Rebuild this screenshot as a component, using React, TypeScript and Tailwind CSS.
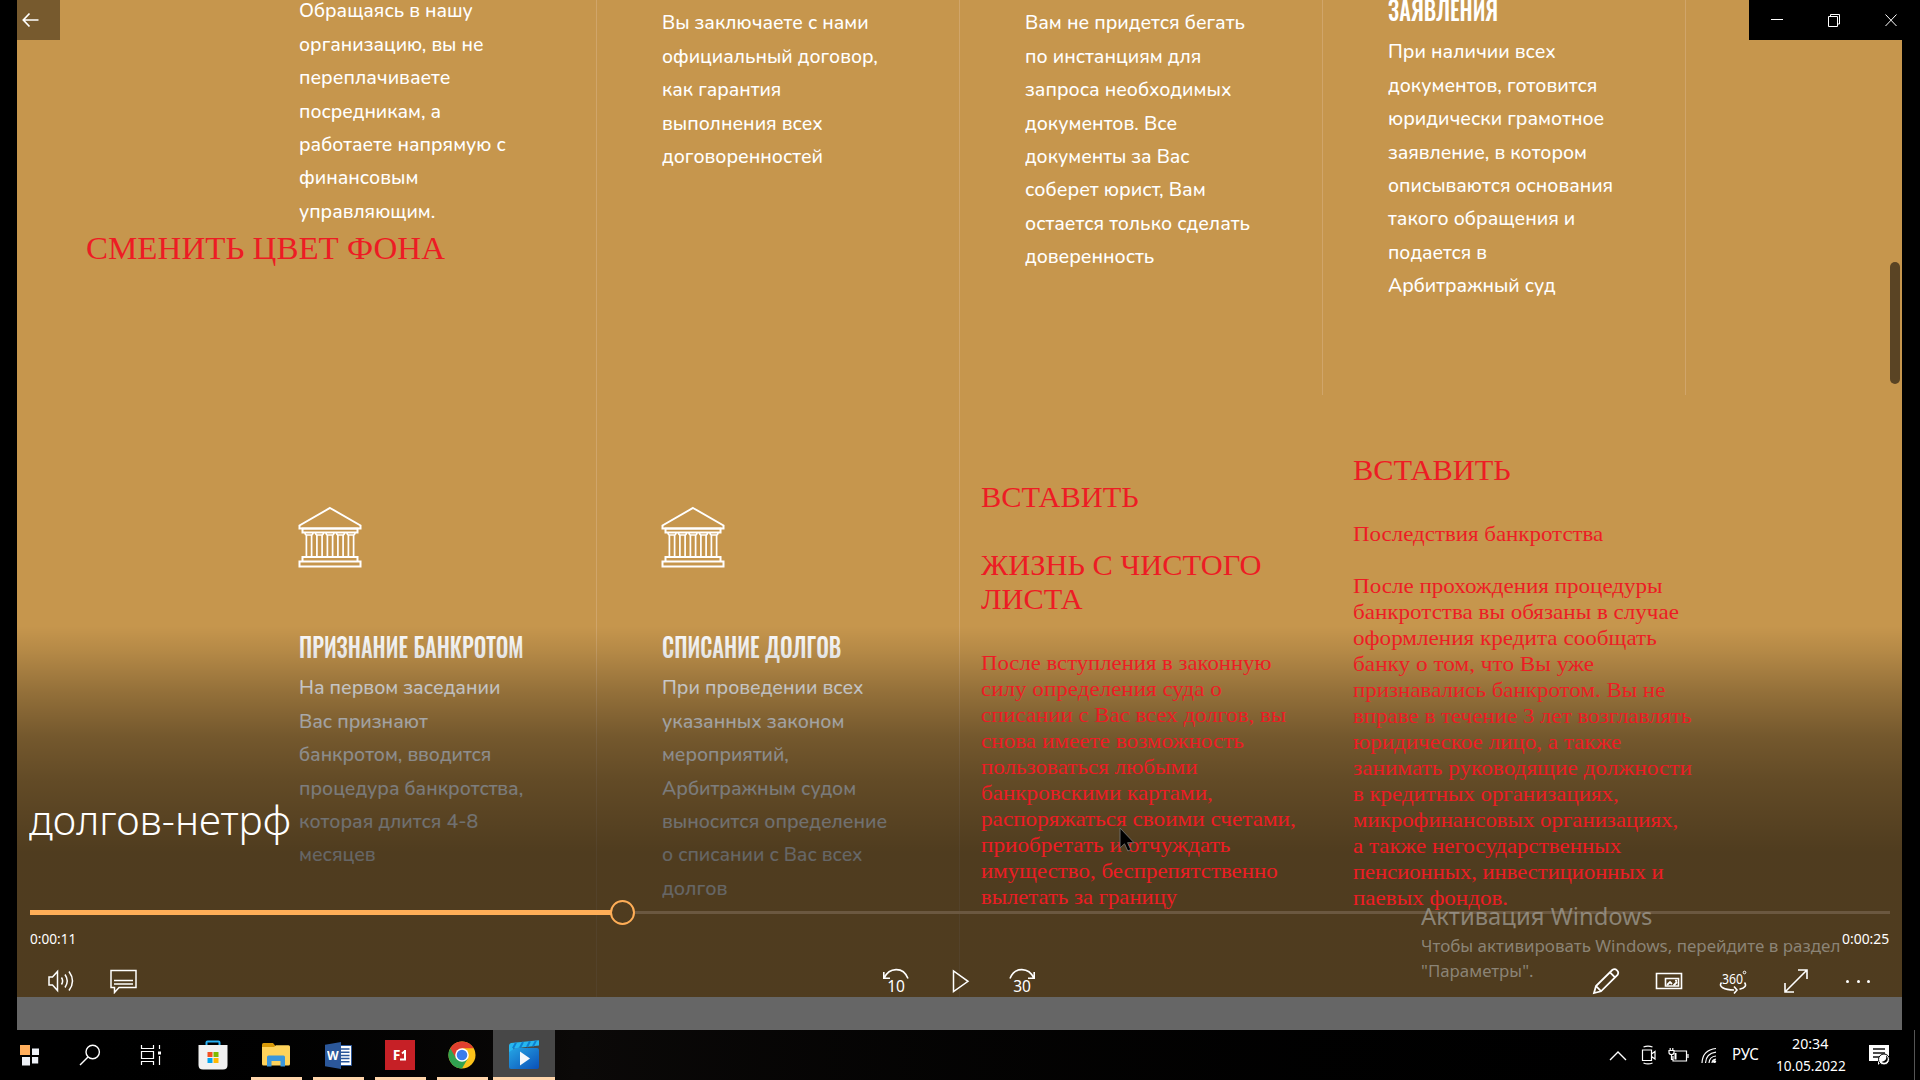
import { useLayoutEffect, useRef, useState } from "react";

type Row = [text: string, width: number];

/** A single line of text condensed or stretched to a given width. */
function Fit({ text, w, className = "" }: { text: string; w: number; className?: string }) {
  const ref = useRef<HTMLSpanElement>(null);
  const [scale, setScale] = useState(1);
  useLayoutEffect(() => {
    if (ref.current) setScale(w / ref.current.offsetWidth);
  }, [w, text]);
  return (
    <div className={`whitespace-nowrap ${className}`} style={{ width: w }}>
      <span ref={ref} className="inline-block origin-left align-top" style={{ transform: `scaleX(${scale})` }}>
        {text}
      </span>
    </div>
  );
}

function Copy({ rows }: { rows: Row[] }) {
  return (
    <div className="font-['Nunito','Lato','Noto_Sans',sans-serif] text-[19.5px] font-medium leading-[33.4px] text-white">
      {rows.map(([t, w]) => (
        <Fit key={t} text={t} w={w} />
      ))}
    </div>
  );
}

function Heading({ text, w }: { text: string; w: number }) {
  return <Fit text={text} w={w} className="font-['Oswald','Roboto_Condensed','Roboto',sans-serif] text-[27px] font-medium leading-[36px] text-white" />;
}

const top: { pad: string; head?: Row; rows: Row[] }[] = [
  {
    pad: "-mt-[5.700px]",
    rows: [
      ["Обращаясь в нашу", 174],
      ["организацию, вы не", 185],
      ["переплачиваете", 151],
      ["посредникам, а", 142],
      ["работаете напрямую с", 207],
      ["финансовым", 119],
      ["управляющим.", 136],
    ],
  },
  {
    pad: "mt-[6.300px]",
    rows: [
      ["Вы заключаете с нами", 207],
      ["официальный договор,", 216],
      ["как гарантия", 119],
      ["выполнения всех", 161],
      ["договоренностей", 161],
    ],
  },
  {
    pad: "mt-[6.300px]",
    rows: [
      ["Вам не придется бегать", 220],
      ["по инстанциям для", 176],
      ["запроса необходимых", 206],
      ["документов. Все", 152],
      ["документы за Вас", 165],
      ["соберет юрист, Вам", 181],
      ["остается только сделать", 225],
      ["доверенность", 129],
    ],
  },
  {
    pad: "-mt-[9px]",
    head: ["ЗАЯВЛЕНИЯ", 110],
    rows: [
      ["При наличии всех", 168],
      ["документов, готовится", 209],
      ["юридически грамотное", 216],
      ["заявление, в котором", 199],
      ["описываются основания", 225],
      ["такого обращения и", 187],
      ["подается в", 99],
      ["Арбитражный суд", 168],
    ],
  },
];

const bottom: { head: Row; rows: Row[] }[] = [
  {
    head: ["ПРИЗНАНИЕ БАНКРОТОМ", 225],
    rows: [
      ["На первом заседании", 201],
      ["Вас признают", 129],
      ["банкротом, вводится", 192],
      ["процедура банкротства,", 224],
      ["которая длится 4-8", 179],
      ["месяцев", 77],
    ],
  },
  {
    head: ["СПИСАНИЕ ДОЛГОВ", 179],
    rows: [
      ["При проведении всех", 202],
      ["указанных законом", 182],
      ["мероприятий,", 127],
      ["Арбитражным судом", 194],
      ["выносится определение", 225],
      ["о списании с Вас всех", 201],
      ["долгов", 65],
    ],
  },
];

const freshStart: Row[] = [
  ["После вступления в законную", 290],
  ["силу определения суда о", 241],
  ["списании с Вас всех долгов, вы", 305],
  ["снова имеете возможность", 263],
  ["пользоваться любыми", 216],
  ["банкровскими картами,", 232],
  ["распоряжаться своими счетами,", 315],
  ["приобретать и отчуждать", 249],
  ["имущество, беспрепятственно", 297],
  ["вылетать за границу", 196],
];

const consequences: Row[] = [
  ["После прохождения процедуры", 310],
  ["банкротства вы обязаны в случае", 326],
  ["оформления кредита сообщать", 304],
  ["банку о том, что Вы уже", 241],
  ["признавались банкротом. Вы не", 312],
  ["вправе в течение 3 лет возглавлять", 339],
  ["юридическое лицо, а также", 268],
  ["занимать руководящие должности", 339],
  ["в кредитных организациях,", 266],
  ["микрофинансовых организациях,", 325],
  ["а также негосударственных", 268],
  ["пенсионных, инвестиционных и", 311],
  ["паевых фондов.", 155],
];

function Bank() {
  return (
    <svg className="block h-[62px] w-[64px]" viewBox="0 0 64 62" fill="none" stroke="#fff" strokeWidth="2">
      <path d="M32 2 62.500 19.500v3h-61v-3Z" />
      <path d="M4.500 22.500h55v4h-55ZM4.500 51h55v4.500h-55ZM1.500 55.500h61v5h-61Z" />
      {[11, 21.5, 32, 42.5, 53].map((x) => (
        <g key={x} transform={`translate(${x} 0)`}>
          <path d="M-4 26.500q.2 2.500 1.500 2.500h5q1.300 0 1.500-2.500M-2.600 29v22M2.600 29v22" strokeWidth="1.700" />
        </g>
      ))}
    </svg>
  );
}

function Page() {
  return (
    <div className="flex h-[997px] flex-col bg-[#c6964d] pl-[217px]">
      <div className="flex h-[395px]">
        {top.map((c, i) => (
          <div key={i} className="w-[363px] shrink-0 border-r border-[#d0a56a] pl-[65px]">
            <div className={c.pad}>
              {c.head && <Heading text={c.head[0]} w={c.head[1]} />}
              <div className={c.head ? "pt-[8.300px]" : ""}>
                <Copy rows={c.rows} />
              </div>
            </div>
          </div>
        ))}
      </div>
      <div className="flex grow">
        {bottom.map((c) => (
          <div key={c.head[0]} className="w-[363px] shrink-0 border-r border-[#d0a56a] pl-[65px] pt-[111px]">
            <div className="-ml-px">
              <Bank />
            </div>
            <div className="pt-[60px]">
              <Heading text={c.head[0]} w={c.head[1]} />
            </div>
            <div className="pt-[7.300px]">
              <Copy rows={c.rows} />
            </div>
          </div>
        ))}
      </div>
    </div>
  );
}

function Annotations() {
  return (
    <div className="font-['Liberation_Serif',serif] text-[#ed1c24]">
      <div className="absolute left-[86px] top-[230px] text-[32px] leading-[36px]">
        <Fit text="СМЕНИТЬ ЦВЕТ ФОНА" w={359} />
      </div>
      <div className="absolute left-[981px] top-[480px]">
        <div className="text-[30px] leading-[34px]">
          <Fit text="ВСТАВИТЬ" w={158} />
          <Fit text="ЖИЗНЬ С ЧИСТОГО" w={281} className="pt-[34px]" />
          <Fit text="ЛИСТА" w={102} />
        </div>
        <div className="pt-[34px] text-[22px] leading-[26px]">
          {freshStart.map(([t, w]) => (
            <Fit key={t} text={t} w={w} />
          ))}
        </div>
      </div>
      <div className="absolute left-[1353px] top-[453px]">
        <div className="text-[30px] leading-[34px]">
          <Fit text="ВСТАВИТЬ" w={158} />
        </div>
        <div className="pt-[34px] text-[22px] leading-[26px]">
          <Fit text="Последствия банкротства" w={250} className="pb-[26px]" />
          {consequences.map(([t, w]) => (
            <Fit key={t} text={t} w={w} />
          ))}
        </div>
      </div>
    </div>
  );
}

function Skip({ n, flip }: { n: string; flip?: boolean }) {
  return (
    <div className="relative h-[26px] w-[28px]">
      <svg className={flip ? "h-[14px] w-[28px] -scale-x-100" : "h-[14px] w-[28px]"} viewBox="0 0 28 14" fill="none" stroke="#fff" strokeWidth="1.600">
        <path d="M1.800 4v6.300H8M2.200 10C7-.5 21-2 26 10.500" />
      </svg>
      <span className="absolute inset-x-0 top-[9px] text-center text-[15.5px] leading-[18px] text-white">{n}</span>
    </div>
  );
}

function Player() {
  return (
    <div className="absolute left-[17px] top-0 flex h-[1030px] w-[1885px] flex-col font-['Noto_Sans',sans-serif] text-white">
      <div className="flex h-10 justify-between">
        <div className="flex h-10 w-[43px] items-center bg-black/40 pl-[5px]">
          <svg width="18" height="16" viewBox="0 0 18 16" fill="none" stroke="#fff" strokeWidth="1.700">
            <path d="M16.500 8H1.500M7.500 1.500 1.300 8l6.200 6.500" />
          </svg>
        </div>
        <div className="flex h-10 w-[153px] items-center bg-black pl-[21px]">
          <svg width="128" height="14" viewBox="0 0 128 14" fill="none" stroke="#fff" strokeWidth="1">
            <path d="M1 6.500h12M58.500 3.500h9v10h-9ZM60.500 3.500v-2h9v9.500h-2M115.500 1.500l11 11.500M126.500 1.500l-11 11.500" />
          </svg>
        </div>
      </div>
      <div className="mt-[222px] mr-[2px] h-[122px] w-[10px] self-end rounded-full bg-[#5a4424]" />
      <div className="mt-auto flex h-[251px] flex-col">
        <div className="pl-[12px] pt-[14px] text-[40px] font-light leading-[54px]">
          <Fit text="долгов-нетрф" w={262} />
        </div>
        <div className="ml-[13px] mt-[53px] flex h-[25px] w-[1860px] items-center">
          <div className="h-[5px] w-[581px] bg-[#ffae57]" />
          <div className="-ml-px h-[25px] w-[25px] shrink-0 rounded-full border-[2.5px] border-[#ffae57]" />
          <div className="h-[3px] grow bg-[#6b5840]" />
        </div>
        <div className="mx-[13px] mt-[2px] flex h-[22px] justify-between text-[14.5px] leading-[22px]">
          <Fit text="0:00:11" w={46} />
          <Fit text="0:00:25" w={47} />
        </div>
        <div className="mt-[17px] flex h-[30px] items-center pl-[31px] pr-[32px]">
          <svg width="27" height="24" viewBox="0 0 27 24" fill="none" stroke="#fff" strokeWidth="1.500">
            <path d="M1 8v8h3.500l5 5.500v-19l-5 5.500ZM13.500 8.500q2.200 3.500 0 7M17 5.500q4.500 6.500 0 13M21 2.500q7 9.500 0 19" />
          </svg>
          <svg className="ml-[35px]" width="27" height="25" viewBox="0 0 27 25" fill="none" stroke="#fff" strokeWidth="1.500">
            <path d="M1 1.500h25v17H9l-4.500 5v-5H1ZM4 11.500h19M4 15h19" />
          </svg>
          <div className="ml-[745px] flex items-center">
            <Skip n="10" />
            <svg className="ml-[40px]" width="20" height="24" viewBox="0 0 20 24" fill="none" stroke="#fff" strokeWidth="1.500">
              <path d="M3.500 2v20.500L18 12.300Z" />
            </svg>
            <div className="ml-[38px]">
              <Skip n="30" flip />
            </div>
          </div>
          <div className="ml-auto flex items-center">
            <svg width="28" height="28" viewBox="0 0 28 28" fill="none" stroke="#fff" strokeWidth="1.800">
              <path d="M2 26l2-7L20.500 2.800q2.300-1.500 4.500.5t.5 4.700L9 24.300ZM4 19l5 5.200M18 5.300l5 5" />
            </svg>
            <svg className="ml-[35px]" width="28" height="18" viewBox="0 0 28 18" fill="none" stroke="#fff" strokeWidth="1.600">
              <path d="M1.500 1.500h25v15h-25ZM10.500 6.500h13v7.500h-13Z" />
              <path d="m12 13 3-3 2 2M18.500 13.500 22 10M20 8.700h2" strokeWidth="1.800" />
            </svg>
            <div className="relative ml-[36px] h-[26px] w-[28px]">
              <span className="absolute left-[3px] top-[2px] text-[14px] leading-[18px]">
                <Fit text="360" w={21} />
              </span>
              <svg className="absolute inset-0" width="28" height="26" viewBox="0 0 28 26" fill="none" stroke="#fff" strokeWidth="1.600">
                <circle cx="25.500" cy="4.500" r="1.300" strokeWidth="1" />
                <path d="M2.500 14.500C-1 18.500 5 22 15 22M15 18.500l3 3.500-3 3.500M20.500 21.300Q29 19 25.500 14.500" />
              </svg>
            </div>
            <svg className="ml-[36px]" width="26" height="26" viewBox="0 0 26 26" fill="none" stroke="#fff" strokeWidth="1.600">
              <path d="M2 24 24 2M15 2h9v9M2 15v9h9" />
            </svg>
            <div className="ml-[37px] flex gap-[7.500px]">
              <i className="size-[3px] rounded-full bg-white" />
              <i className="size-[3px] rounded-full bg-white" />
              <i className="size-[3px] rounded-full bg-white" />
            </div>
          </div>
        </div>
      </div>
    </div>
  );
}

function Watermark() {
  return (
    <div className="absolute left-[1421px] top-[898px] font-['Noto_Sans',sans-serif] text-[#a09c94]/75">
      <div className="text-[23.5px] leading-[36px]">
        <Fit text="Активация Windows" w={231} />
      </div>
      <div className="-mt-px text-[17px] leading-[25px]">
        <Fit text="Чтобы активировать Windows, перейдите в раздел" w={419} />
        <Fit text={'"Параметры".'} w={113} />
      </div>
    </div>
  );
}

function AppSlot({ children, active, running }: { children: React.ReactNode; active?: boolean; running?: boolean }) {
  return (
    <div className={active ? "relative flex h-[50px] w-[62px] items-center justify-center bg-[#474747]" : "relative flex h-[50px] w-[62px] items-center justify-center"}>
      {children}
      {running && <div className={active ? "absolute inset-x-0 bottom-0 h-[3px] bg-[#ffd5ab]" : "absolute inset-x-[5.500px] bottom-0 h-[3px] bg-[#ffd5ab]"} />}
    </div>
  );
}

function Taskbar() {
  return (
    <div className="flex h-[50px] items-stretch bg-linear-to-r from-black via-[#0b0908] via-30% to-black font-['Noto_Sans',sans-serif] text-white">
      <div className="flex w-[60px] items-center pl-[20px]">
        <svg width="20" height="22" viewBox="0 0 20 22">
          <path d="M0 1h10v10H0Z" fill="#ffae5c" />
          <path d="M12 4.500h7V11h-7ZM2 13h8v8.500H2ZM12 13h6.200v6.500H12Z" fill="#eef1f7" />
        </svg>
      </div>
      <div className="flex w-[60px] items-center justify-center">
        <svg width="22" height="22" viewBox="0 0 22 22" fill="none" stroke="#fff" strokeWidth="1.400">
          <circle cx="13.700" cy="8" r="6.700" />
          <path d="M9 13 1 21" />
        </svg>
      </div>
      <div className="flex w-[62px] items-center justify-center">
        <svg width="22" height="20" viewBox="0 0 22 20" fill="none" stroke="#fff" strokeWidth="1.200">
          <path d="M1.500 0v3.500h12V0M1.500 20v-3.500h12V20M1.500 6.500h12v7h-12ZM19.500 0v4M19.500 11v9" />
          <path d="M18 6.500h3v3h-3Z" fill="#fff" stroke="none" />
        </svg>
      </div>
      <AppSlot>
        <svg width="30" height="30" viewBox="0 0 30 30">
          <path d="M8.500 6V2.500q0-1 1-1h11q1 0 1 1V6" fill="none" stroke="#26b0f4" strokeWidth="2" />
          <path d="M.5 5h29v20q0 4.500-4.500 4.500H5Q.5 29.500.5 25Z" fill="#f1f1f1" />
          <path d="M9.500 12h5v5h-5Z" fill="#f25022" />
          <path d="M15.500 12h5v5h-5Z" fill="#7fba00" />
          <path d="M9.500 18h5v5h-5Z" fill="#00a4ef" />
          <path d="M15.500 18h5v5h-5Z" fill="#ffb900" />
        </svg>
      </AppSlot>
      <div className="ml-px flex">
        <AppSlot running>
          <svg width="28" height="24" viewBox="0 0 28 24">
            <path d="M0 1.500Q0 0 1.500 0H11l2.500 3V7H0Z" fill="#d99a08" />
            <path d="M0 4h12l2-1.800h12.500q1.500 0 1.500 1.500V21q0 1.500-1.500 1.500h-25Q0 22.500 0 21Z" fill="#ffd35b" />
            <path d="M5 23.500V14q0-1.500 1.500-1.500h15q1.500 0 1.500 1.500v9.500h-4.500V18h-9v5.500Z" fill="#3b97dc" />
          </svg>
        </AppSlot>
        <AppSlot running>
          <div className="relative h-[27px] w-[27px]">
            <svg className="absolute inset-0" width="27" height="27" viewBox="0 0 27 27">
              <path d="M14 3.500h12.500v20H14Z" fill="#fff" stroke="#2b579a" />
              <path d="M16 7h8.500M16 10.200h8.500M16 13.400h8.500M16 16.600h8.500M16 19.800h8.500" stroke="#2b579a" strokeWidth="1.500" />
              <path d="M0 2.800 16 0v27L0 24.200Z" fill="#2b579a" />
            </svg>
            <span className="absolute left-[2px] top-[5px] text-[13px] font-bold leading-[17px]">
              <Fit text="W" w={12} />
            </span>
          </div>
        </AppSlot>
        <AppSlot running>
          <div className="flex h-[30px] w-[30px] items-center justify-center bg-[#c62026]">
            <span className="text-[14px] font-bold leading-none">F</span>
            <svg width="7" height="11" viewBox="0 0 7 11" fill="none" stroke="#fff" strokeWidth="2">
              <path d="M5 0v9.500H0M2 3.500 5 1" />
            </svg>
          </div>
        </AppSlot>
        <AppSlot running>
          <svg width="28" height="28" viewBox="0 0 28 28">
            <circle cx="14" cy="14" r="13.500" fill="#fbc21a" />
            <path d="M14 14 2.300 7.250A13.500 13.500 0 0 0 14 27.500L19.850 17.400Z" fill="#31a350" />
            <path d="M14 7.200H25.700A13.500 13.500 0 0 0 2.300 7.250L8.150 17.400 14 14Z" fill="#e2402f" />
            <circle cx="14" cy="14" r="6.800" fill="#fff" />
            <circle cx="14" cy="14" r="5.300" fill="#3b7ded" />
          </svg>
        </AppSlot>
        <AppSlot running active>
          <svg width="32" height="30" viewBox="0 0 32 30">
            <defs>
              <linearGradient id="film" x1="0" y1="0" x2="1" y2="1">
                <stop offset="0" stopColor="#25a5e4" />
                <stop offset="1" stopColor="#0b50b8" />
              </linearGradient>
            </defs>
            <path d="M1 5.500Q1 3.500 3 3L31 .3v5.200L5 8.500v4H1Z" fill="#27b7ef" />
            <path d="m8 2.600-3 5.700M15 2l-3 5.700M22 1.200 19 7M28 .6l-3 5.600" stroke="#0d7fd0" strokeWidth="2" />
            <path d="M1 12 7 8h22q2 0 2 2v17q0 2-2 2H3q-2 0-2-2Z" fill="url(#film)" />
            <path d="m12 11.500 10 7-10 7Z" fill="#f5f7fb" />
          </svg>
        </AppSlot>
      </div>
      <div className="ml-auto flex items-center">
        <svg width="18" height="11" viewBox="0 0 18 11" fill="none" stroke="#fff" strokeWidth="1.400">
          <path d="m1 10 8-8 8 8" />
        </svg>
        <svg className="ml-[14px]" width="16" height="20" viewBox="0 0 16 20" fill="none" stroke="#fff" strokeWidth="1.200">
          <path d="M1.500 5h9v10.500h-9ZM10.500 9l3.500-2.500v7.500L10.500 11.500M2.500 2Q7 .2 11.500 2M2.500 18q4.500 1.800 9 0" />
        </svg>
        <svg className="ml-[11px]" width="21" height="16" viewBox="0 0 21 16" fill="none" stroke="#fff" strokeWidth="1.200">
          <path d="M6 4h12.500v10H5V9M20 7v4M1 3.500h5v2q0 2-2.500 2T1 5.500ZM2.200 3.500V1M4.800 3.500V1M3.500 7.500v5h2" />
          <path d="M6.500 6h2v6.500h-2Z" fill="#fff" stroke="none" />
        </svg>
        <svg className="ml-[12px]" width="16" height="17" viewBox="0 0 16 17" fill="none" stroke="#fff" strokeWidth="1.200">
          <path d="M1 16Q1.500 3 15 1.500M4.500 16Q5 6.500 15 5.200M8 16q.5-6.500 7-7M11 16q.3-3.500 4-3.800" />
          <circle cx="13.500" cy="14.500" r="1.600" fill="#fff" stroke="none" />
        </svg>
        <div className="ml-[15px] text-[15.5px]">
          <Fit text="РУС" w={27} />
        </div>
        <div className="ml-[17px] flex w-[70px] flex-col items-center pb-[2px] text-[15px] leading-[22.500px]">
          <Fit text="20:34" w={36} className="-translate-x-px" />
          <Fit text="10.05.2022" w={70} />
        </div>
        <svg className="ml-[23px]" width="21" height="22" viewBox="0 0 21 22">
          <path d="M0 1h20v16h-7l-4 4v-4H0Z" fill="#fff" />
          <path d="M4 5h12M4 9h12M4 13h7" stroke="#111" strokeWidth="1.300" />
          <circle cx="15" cy="15.500" r="5.500" fill="#fff" stroke="#000" />
          <path d="M17 11.500q1.500 5-4.500 6.500 4 2 6-1.500 1-3-1.500-5Z" fill="#000" />
        </svg>
        <div className="ml-[24px] mr-[5px] h-[50px] w-px bg-[#555]" />
      </div>
    </div>
  );
}

export default function App() {
  return (
    <div className="flex h-[1080px] w-[1920px] flex-col overflow-hidden bg-black">
      <div className="relative h-[1030px] px-[17px] pr-[18px]">
        <div className="relative h-[1030px] overflow-hidden bg-white">
          <Page />
          <div className="absolute inset-x-0 bottom-0 top-[626px] bg-[linear-gradient(to_bottom,rgba(0,0,0,0)_0px,rgba(0,0,0,0.09)_26px,rgba(0,0,0,0.26)_67px,rgba(0,0,0,0.41)_110px,rgba(0,0,0,0.5)_154px,rgba(0,0,0,0.6)_226px)]" />
        </div>
        <Annotations />
        <Player />
        <Watermark />
        <svg className="absolute left-[1119px] top-[827px]" width="16" height="26" viewBox="0 0 16 26">
          <path d="M1 1v20l4.500-4.200 3.300 7.200 3-1.400-3.200-6.900H15Z" fill="#000" stroke="#6d6a66" strokeWidth="1" />
        </svg>
      </div>
      <Taskbar />
    </div>
  );
}
